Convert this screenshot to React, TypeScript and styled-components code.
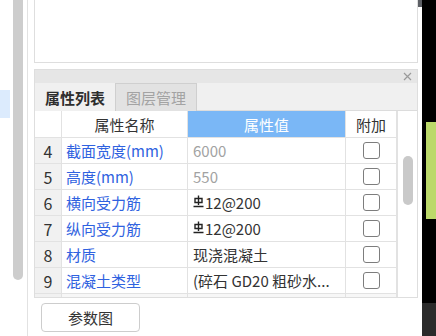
import React from 'react';
import styled, { createGlobalStyle } from 'styled-components';

const GlobalStyle = createGlobalStyle`
  html, body {
    margin: 0;
    padding: 0;
    background: #fff;
  }
  * {
    box-sizing: border-box;
  }
`;

interface Row {
  no: number;
  name: string;
  value: string;
  muted?: boolean;
  rebar?: boolean;
}

const rows: Row[] = [
  { no: 4, name: '截面宽度(mm)', value: '6000', muted: true },
  { no: 5, name: '高度(mm)', value: '550', muted: true },
  { no: 6, name: '横向受力筋', value: '12@200', rebar: true },
  { no: 7, name: '纵向受力筋', value: '12@200', rebar: true },
  { no: 8, name: '材质', value: '现浇混凝土' },
  { no: 9, name: '混凝土类型', value: '(碎石 GD20 粗砂水...' },
];

const RebarIcon = () => (
  <svg width="11" height="13" viewBox="0 0 11 13" style={{ marginRight: 1, marginBottom: 2 }}>
    <path d="M2 3.5h7v4H2z M5.5 0.5v9.5 M0.5 11.5h10" fill="none" stroke="#222" strokeWidth="1.4" />
  </svg>
);

const CloseIcon = () => (
  <svg width="9" height="9" viewBox="0 0 9 9">
    <path d="M1 1l7 7M8 1l-7 7" stroke="#9a9a9a" strokeWidth="1.2" />
  </svg>
);

const App: React.FC = () => {
  return (
    <Screen>
      <GlobalStyle />
      <LeftStrip>
        <ListColumn>
          <ListHighlight />
        </ListColumn>
        <ScrollBar />
        <Divider />
      </LeftStrip>
      <Main>
        <Panels>
          <PreviewPanel />
          <PropertyPanel>
            <TitleBar>
              <CloseIcon />
            </TitleBar>
            <TabBar>
              <Tab active>属性列表</Tab>
              <Tab>图层管理</Tab>
            </TabBar>
            <TableArea>
              <Grid>
                <HeadCell />
                <HeadCell>属性名称</HeadCell>
                <HeadCell highlight>属性值</HeadCell>
                <HeadCell>附加</HeadCell>
                {rows.map((row) => (
                  <React.Fragment key={row.no}>
                    <NumCell>{row.no}</NumCell>
                    <NameCell>{row.name}</NameCell>
                    <ValueCell muted={row.muted}>
                      {row.rebar && <RebarIcon />}
                      {row.value}
                    </ValueCell>
                    <CheckCell>
                      <CheckBox />
                    </CheckCell>
                  </React.Fragment>
                ))}
                <PartialCell num />
                <PartialCell />
                <PartialCell />
                <PartialCell />
              </Grid>
              <ScrollTrack>
                <ScrollThumb />
              </ScrollTrack>
            </TableArea>
          </PropertyPanel>
          <Footer>
            <Button>参数图</Button>
          </Footer>
        </Panels>
        <EdgeScroll>
          <EdgeThumb />
        </EdgeScroll>
      </Main>
      <RightStrip>
        <GreenBlock />
        <DarkBlock />
      </RightStrip>
    </Screen>
  );
};

export default App;

const Screen = styled.div`
  width: 436px;
  height: 336px;
  display: flex;
  overflow: hidden;
  background: #fff;
  font-family: "Noto Sans CJK SC", "Noto Sans", sans-serif;
`;

const LeftStrip = styled.div`
  width: 34px;
  height: 336px;
  display: flex;
  flex-shrink: 0;
`;

const ListColumn = styled.div`
  width: 10px;
  padding-top: 90px;
`;

const ListHighlight = styled.div`
  width: 10px;
  height: 28px;
  background: #dcebfd;
`;

const ScrollBar = styled.div`
  width: 10px;
  height: 280px;
  margin-left: 3px;
  background: #cdcdcd;
  border-radius: 0 0 5px 5px;
`;

const Divider = styled.div`
  width: 1px;
  height: 336px;
  margin-left: 4px;
  background: #e2e2e2;
`;

const Main = styled.div`
  width: 388px;
  display: flex;
  flex-shrink: 0;
`;

const Panels = styled.div`
  width: 384px;
  display: flex;
  flex-direction: column;
`;

const PreviewPanel = styled.div`
  height: 63px;
  border: 1px solid #dedede;
  border-top: none;
  background: #fff;
`;

const PropertyPanel = styled.div`
  margin-top: 6px;
  border: 1px solid #dedede;
  display: flex;
  flex-direction: column;
  background: #f0f0f0;
`;

const TitleBar = styled.div`
  height: 13px;
  background: #e6e6e6;
  display: flex;
  justify-content: flex-end;
  align-items: center;
  padding-right: 5px;
`;

const TabBar = styled.div`
  height: 28px;
  display: flex;
  background: #f0f0f0;
  border-bottom: 1px solid #dcdcdc;
`;

const Tab = styled.div<{ active?: boolean }>`
  width: ${(p) => (p.active ? '80px' : '82px')};
  height: 28px;
  display: flex;
  align-items: center;
  justify-content: center;
  font-size: 15px;
  font-weight: ${(p) => (p.active ? 700 : 400)};
  color: ${(p) => (p.active ? '#2e2e2e' : '#a3a3a3')};
  background: ${(p) => (p.active ? '#f0f0f0' : '#e2e2e2')};
  border: ${(p) => (p.active ? 'none' : '1px solid #cfcfcf')};
  border-bottom: none;
`;

const TableArea = styled.div`
  display: flex;
  background: #fff;
`;

const Grid = styled.div`
  display: grid;
  grid-template-columns: 27px 126px 158px 51px;
  grid-template-rows: 27px repeat(6, 26px) 3px;
`;

const Cell = styled.div`
  border-right: 1px solid #e2e2e2;
  border-bottom: 1px solid #e2e2e2;
  display: flex;
  align-items: center;
  font-size: 15px;
  white-space: nowrap;
  overflow: hidden;
`;

const HeadCell = styled(Cell)<{ highlight?: boolean }>`
  justify-content: center;
  color: ${(p) => (p.highlight ? '#fff' : '#333')};
  background: ${(p) => (p.highlight ? '#7ab7f6' : '#fff')};
`;

const NumCell = styled(Cell)`
  justify-content: center;
  background: #f1f1f1;
  color: #333;
  font-size: 16px;
`;

const NameCell = styled(Cell)`
  padding-left: 4px;
  color: #2f62e0;
`;

const ValueCell = styled(Cell)<{ muted?: boolean }>`
  padding-left: 5px;
  color: ${(p) => (p.muted ? '#a2a2a2' : '#333')};
`;

const CheckCell = styled(Cell)`
  justify-content: center;
`;

const CheckBox = styled.div`
  width: 17px;
  height: 17px;
  border: 1.5px solid #7d7d7d;
  border-radius: 3px;
  background: #fff;
`;

const PartialCell = styled(Cell)<{ num?: boolean }>`
  border-bottom: none;
  background: ${(p) => (p.num ? '#f1f1f1' : '#f7f7f7')};
`;

const ScrollTrack = styled.div`
  width: 20px;
  border-left: 1px solid #e2e2e2;
  padding-top: 45px;
  padding-left: 5px;
  background: #fff;
`;

const ScrollThumb = styled.div`
  width: 10px;
  height: 49px;
  border-radius: 5px;
  background: #c9c9c9;
`;

const Footer = styled.div`
  padding: 5px 0 0 7px;
`;

const Button = styled.div`
  width: 99px;
  height: 29px;
  border: 1px solid #cdcdcd;
  border-radius: 4px;
  background: #fff;
  display: flex;
  align-items: center;
  justify-content: center;
  font-size: 15px;
  color: #333;
`;

const EdgeScroll = styled.div`
  width: 4px;
  background: #fff;
`;

const EdgeThumb = styled.div`
  width: 4px;
  height: 7px;
  background: #5d6066;
`;

const RightStrip = styled.div`
  width: 14px;
  height: 336px;
  background: #000;
  display: flex;
  flex-direction: column;
  align-items: flex-end;
  padding-top: 122px;
`;

const GreenBlock = styled.div`
  width: 10px;
  height: 97px;
  background: #bcd96a;
`;

const DarkBlock = styled.div`
  width: 14px;
  height: 33px;
  margin-top: auto;
  background: #2b2b2b;
`;
